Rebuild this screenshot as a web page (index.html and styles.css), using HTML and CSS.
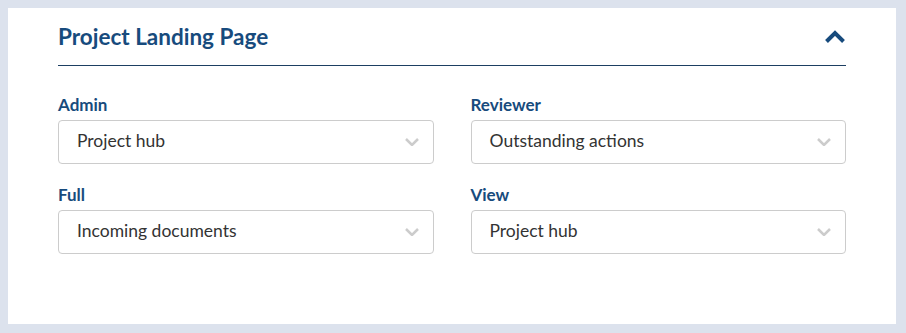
FILE: index.html
```html
<!DOCTYPE html>
<html lang="en">

<head>
  <meta charset="UTF-8">
  <meta name="viewport" content="width=device-width, initial-scale=1.0">
  <title>Project Landing Page</title>
  <link rel="stylesheet" href="styles.css">
</head>

<body>
  <section class="panel">
    <header class="panel-header">
      <h2>Project Landing Page</h2>
      <button class="toggle" type="button" aria-label="Collapse">
        <svg width="22" height="14" viewBox="0 0 22 14">
          <path d="M2.5 11.5 L11 3 L19.5 11.5" fill="none" stroke="currentColor" stroke-width="4" />
        </svg>
      </button>
    </header>

    <div class="fields">
      <label class="field">
        <span class="field-label">Admin</span>
        <span class="select">
          <span>Project hub</span>
          <svg class="caret" width="14" height="8" viewBox="0 0 14 8">
            <path d="M1 1 L7 7 L13 1" fill="none" stroke="currentColor" stroke-width="2.5" />
          </svg>
        </span>
      </label>
      <label class="field">
        <span class="field-label">Reviewer</span>
        <span class="select">
          <span>Outstanding actions</span>
          <svg class="caret" width="14" height="8" viewBox="0 0 14 8">
            <path d="M1 1 L7 7 L13 1" fill="none" stroke="currentColor" stroke-width="2.5" />
          </svg>
        </span>
      </label>
      <label class="field">
        <span class="field-label">Full</span>
        <span class="select">
          <span>Incoming documents</span>
          <svg class="caret" width="14" height="8" viewBox="0 0 14 8">
            <path d="M1 1 L7 7 L13 1" fill="none" stroke="currentColor" stroke-width="2.5" />
          </svg>
        </span>
      </label>
      <label class="field">
        <span class="field-label">View</span>
        <span class="select">
          <span>Project hub</span>
          <svg class="caret" width="14" height="8" viewBox="0 0 14 8">
            <path d="M1 1 L7 7 L13 1" fill="none" stroke="currentColor" stroke-width="2.5" />
          </svg>
        </span>
      </label>
    </div>
  </section>
</body>

</html>
```

FILE: styles.css
```css
body {
  margin: 8px;
  background: #dce2ed;
  font-family: Lato, "Open Sans", sans-serif;
  color: #333333;
}

.panel {
  width: 888px;
  height: 316px;
  box-sizing: border-box;
  padding: 0 50px;
  background: #ffffff;
}

.panel-header {
  display: flex;
  align-items: center;
  justify-content: space-between;
  height: 57px;
  border-bottom: 1px solid #1d3f62;
}

.panel-header h2 {
  margin: 0;
  font-size: 22.5px;
  font-weight: 700;
  color: #174b7d;
}

.toggle {
  display: flex;
  padding: 0;
  border: 0;
  background: none;
  color: #174b7d;
  cursor: pointer;
}

.fields {
  display: grid;
  grid-template-columns: 1fr 1fr;
  column-gap: 37px;
  row-gap: 21px;
  padding-top: 29px;
}

.field {
  display: flex;
  flex-direction: column;
}

.field-label {
  font-size: 17px;
  font-weight: 700;
  line-height: 20px;
  margin-bottom: 5px;
  color: #174b7d;
}

.select {
  display: flex;
  align-items: center;
  justify-content: space-between;
  height: 44px;
  box-sizing: border-box;
  padding: 0 14px 3px 18px;
  border: 1px solid #cccccc;
  border-radius: 4px;
  font-size: 17.5px;
  color: #333333;
}

.caret {
  color: #cccccc;
  margin-top: 3px;
}
```
